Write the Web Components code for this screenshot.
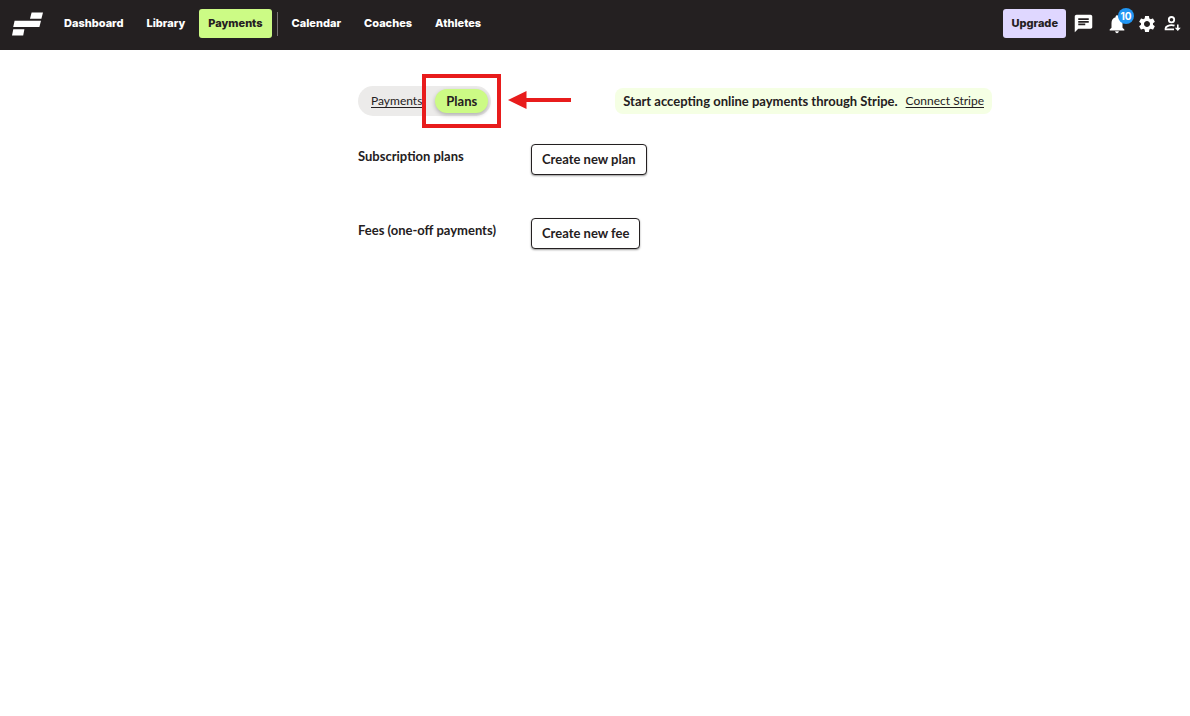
<!DOCTYPE html>
<html lang="en">
<head>
<meta charset="utf-8">
<meta name="viewport" content="width=device-width, initial-scale=1">
<title>Plans</title>
<style>
  body {
    margin: 0;
    background: #fff;
    color: #242021;
    font: 13px/16px Lato, "Noto Sans", sans-serif;
  }
</style>
</head>
<body>
<app-header>
  <nav-item>Dashboard</nav-item>
  <nav-item>Library</nav-item>
  <nav-item active>Payments</nav-item>
  <nav-divider></nav-divider>
  <nav-item>Calendar</nav-item>
  <nav-item>Coaches</nav-item>
  <nav-item>Athletes</nav-item>
  <header-actions slot="actions" count="10"></header-actions>
</app-header>
<plans-page>
  <plan-tabs slot="tabs"></plan-tabs>
  <stripe-notice slot="notice"></stripe-notice>
  <plan-section action="Create new plan">Subscription plans</plan-section>
  <plan-section action="Create new fee">Fees (one-off payments)</plan-section>
</plans-page>

<script>
class BaseElement extends HTMLElement {
  constructor() {
    super();
    this.attachShadow({ mode: 'open' });
  }

  connectedCallback() {
    this.shadowRoot.innerHTML = this.template();
  }
}

class AppHeader extends BaseElement {
  template() {
    return `
      <style>
        :host { display: block; background: #242021; font-family: Inter, sans-serif; }
        header {
          display: flex;
          align-items: center;
          min-height: 50px;
          box-sizing: border-box;
          padding: 0 6px 3px 12px;
        }
        .logo { display: block; margin-right: 12px; }
        .logo svg { display: block; }
        nav { display: flex; align-items: center; gap: 5px; }
        slot[name="actions"]::slotted(*) { margin-left: auto; }
      </style>
      <header>
        <a class="logo" href="#" aria-label="Home">
          <svg width="31" height="24" viewBox="0 0 31 24" fill="#fff">
            <path d="M19.6 0.5H31L29.4 6.8H18zM2.6 8.7H29L27.4 14.9H1.2zM1.3 17.2H12.4L11.2 23.4H0z"/>
          </svg>
        </a>
        <nav><slot></slot></nav>
        <slot name="actions"></slot>
      </header>
    `;
  }
}

class NavItem extends BaseElement {
  template() {
    return `
      <style>
        :host { display: block; }
        a {
          display: block;
          padding: 6px 9px;
          border-radius: 3px;
          color: #fff;
          font-size: 11px;
          font-weight: 800;
          line-height: 17px;
          text-decoration: none;
        }
        :host([active]) a { background: #ccfb85; color: #242021; }
      </style>
      <a href="#"><slot></slot></a>
    `;
  }
}

class NavDivider extends BaseElement {
  template() {
    return `
      <style>
        :host { display: block; width: 1px; height: 24px; background: #777374; }
      </style>
    `;
  }
}

class HeaderActions extends BaseElement {
  template() {
    return `
      <style>
        :host { display: flex; align-items: center; gap: 4px; }
        button { border: 0; font: inherit; cursor: pointer; }
        .upgrade {
          margin-right: 2px;
          padding: 6px 8px;
          border-radius: 3px;
          background: #dfd7ff;
          color: #242021;
          font-size: 11px;
          font-weight: 800;
          line-height: 17px;
        }
        .icon {
          position: relative;
          width: 22px;
          height: 22px;
          padding: 0;
          background: none;
          color: #fff;
        }
        .chat { margin-right: 8px; }
        .bell { margin-right: 4px; }
        svg { display: block; margin: auto; fill: currentColor; }
        .badge {
          position: absolute;
          left: 12px;
          top: -5px;
          width: 16px;
          height: 16px;
          border-radius: 50%;
          background: #2196f3;
          font-size: 10px;
          font-weight: 700;
          line-height: 16px;
          text-align: center;
        }
      </style>
      <button class="upgrade">Upgrade</button>
      <button class="icon chat" aria-label="Messages">
        <svg width="21" height="21" viewBox="0 0 24 24"><path d="M20 2H4c-1.1 0-2 .9-2 2v18l4-4h14c1.1 0 2-.9 2-2V4c0-1.1-.9-2-2-2zM6 6h12v2H6zM6 9h12v2H6zM6 12h8v2H6z" fill-rule="evenodd"/></svg>
      </button>
      <button class="icon bell" aria-label="Notifications">
        <svg width="22" height="22" viewBox="0 0 24 24"><path d="M12 22c1.1 0 2-.9 2-2h-4c0 1.1.89 2 2 2zm6-6v-5c0-3.07-1.64-5.64-4.5-6.32V4c0-.83-.67-1.5-1.5-1.5s-1.5.67-1.5 1.5v.68C7.63 5.36 6 7.92 6 11v5l-2 2v1h16v-1l-2-2z"/></svg>
        <span class="badge">${this.getAttribute('count')}</span>
      </button>
      <button class="icon" aria-label="Settings">
        <svg width="20" height="20" viewBox="0 0 24 24"><path d="M19.14 12.94c.04-.3.06-.61.06-.94 0-.32-.02-.64-.07-.94l2.03-1.58c.18-.14.23-.41.12-.61l-1.92-3.32c-.12-.22-.37-.29-.59-.22l-2.39.96c-.5-.38-1.03-.7-1.62-.94l-.36-2.54c-.04-.24-.24-.41-.48-.41h-3.84c-.24 0-.43.17-.47.41l-.36 2.54c-.59.24-1.13.57-1.62.94l-2.39-.96c-.22-.08-.47 0-.59.22L2.74 8.87c-.12.21-.08.47.12.61l2.03 1.58c-.05.3-.09.63-.09.94s.02.64.07.94l-2.03 1.58c-.18.14-.23.41-.12.61l1.92 3.32c.12.22.37.29.59.22l2.39-.96c.5.38 1.03.7 1.62.94l.36 2.54c.05.24.24.41.48.41h3.84c.24 0 .44-.17.47-.41l.36-2.54c.59-.24 1.13-.56 1.62-.94l2.39.96c.22.08.47 0 .59-.22l1.92-3.32c.12-.22.07-.47-.12-.61l-2.01-1.58zM12 15.6c-1.98 0-3.6-1.62-3.6-3.6s1.62-3.6 3.6-3.6 3.6 1.62 3.6 3.6-1.62 3.6-3.6 3.6z"/></svg>
      </button>
      <button class="icon" aria-label="Account">
        <svg width="20" height="20" viewBox="0 0 20 20">
          <g fill="none" stroke="currentColor" stroke-width="1.8">
            <circle cx="8.5" cy="5.7" r="2.7"/>
            <path d="M11 15.3H2.6V14.3C2.6 12.6 5.8 11.2 8.5 11.2c1.2 0 2.2.2 3 .5"/>
          </g>
          <path d="M14 10.4h1.6v3.4h2.2l-3 3.3-3-3.3H14z"/>
        </svg>
      </button>
    `;
  }
}

class PlansPage extends BaseElement {
  template() {
    return `
      <style>
        :host { display: block; }
        main {
          max-width: 634px;
          margin: 0 auto;
          padding: 36px 16px 36px 176px;
        }
        .top {
          display: flex;
          align-items: center;
          justify-content: space-between;
          margin-bottom: 28px;
        }
        .sections { display: grid; gap: 43px; }
      </style>
      <main>
        <div class="top">
          <slot name="tabs"></slot>
          <slot name="notice"></slot>
        </div>
        <div class="sections"><slot></slot></div>
      </main>
    `;
  }
}

class PlanTabs extends BaseElement {
  template() {
    return `
      <style>
        :host { display: block; }
        nav {
          display: flex;
          align-items: center;
          gap: 3px;
          padding: 3px;
          border-radius: 15px;
          background: #ecebea;
        }
        a {
          padding: 4px 10px;
          border-radius: 12px;
          color: inherit;
          font-size: 12px;
          text-underline-offset: 2px;
        }
        .current {
          position: relative;
          padding: 4px 11px;
          background: #ccfb85;
          box-shadow: 0 2px 4px rgba(0, 0, 0, 0.25);
          font-size: 13px;
          font-weight: 700;
          text-decoration: none;
        }
        .frame {
          position: absolute;
          inset: -15px -13px;
          border: 4px solid #e81c1c;
        }
        .arrow {
          position: absolute;
          left: calc(100% + 20px);
          top: 2px;
        }
      </style>
      <nav aria-label="Payment views">
        <a href="#">Payments</a>
        <a class="current" href="#" aria-current="page">Plans
          <span class="frame"></span>
          <svg class="arrow" width="63" height="18" viewBox="0 0 63 18" fill="#e81c1c">
            <path d="M0 9 18.5 0V7H63v4H18.5V18z"/>
          </svg>
        </a>
      </nav>
    `;
  }
}

class StripeNotice extends BaseElement {
  template() {
    return `
      <style>
        :host { display: block; }
        p {
          display: flex;
          gap: 8px;
          margin: 0;
          padding: 5px 8px;
          border-radius: 8px;
          background: #f5ffe4;
          white-space: nowrap;
        }
        strong { font-weight: 700; }
        a { color: inherit; font-size: 12px; text-underline-offset: 2px; }
      </style>
      <p><strong>Start accepting online payments through Stripe.</strong><a href="#">Connect Stripe</a></p>
    `;
  }
}

class PlanSection extends BaseElement {
  template() {
    return `
      <style>
        :host {
          display: grid;
          grid-template-columns: 173px 1fr;
          align-items: start;
        }
        h2 { margin: 0; padding-top: 4px; font: inherit; font-weight: 700; }
        button {
          justify-self: start;
          padding: 6px 10px 7px;
          border: 1px solid #242021;
          border-radius: 4px;
          background: #fff;
          box-shadow: 0 1px 2px rgba(0, 0, 0, 0.4);
          color: inherit;
          font: inherit;
          font-weight: 700;
          cursor: pointer;
        }
      </style>
      <h2><slot></slot></h2>
      <button>${this.getAttribute('action')}</button>
    `;
  }
}

customElements.define('app-header', AppHeader);
customElements.define('nav-item', NavItem);
customElements.define('nav-divider', NavDivider);
customElements.define('header-actions', HeaderActions);
customElements.define('plans-page', PlansPage);
customElements.define('plan-tabs', PlanTabs);
customElements.define('stripe-notice', StripeNotice);
customElements.define('plan-section', PlanSection);
</script>
</body>
</html>
